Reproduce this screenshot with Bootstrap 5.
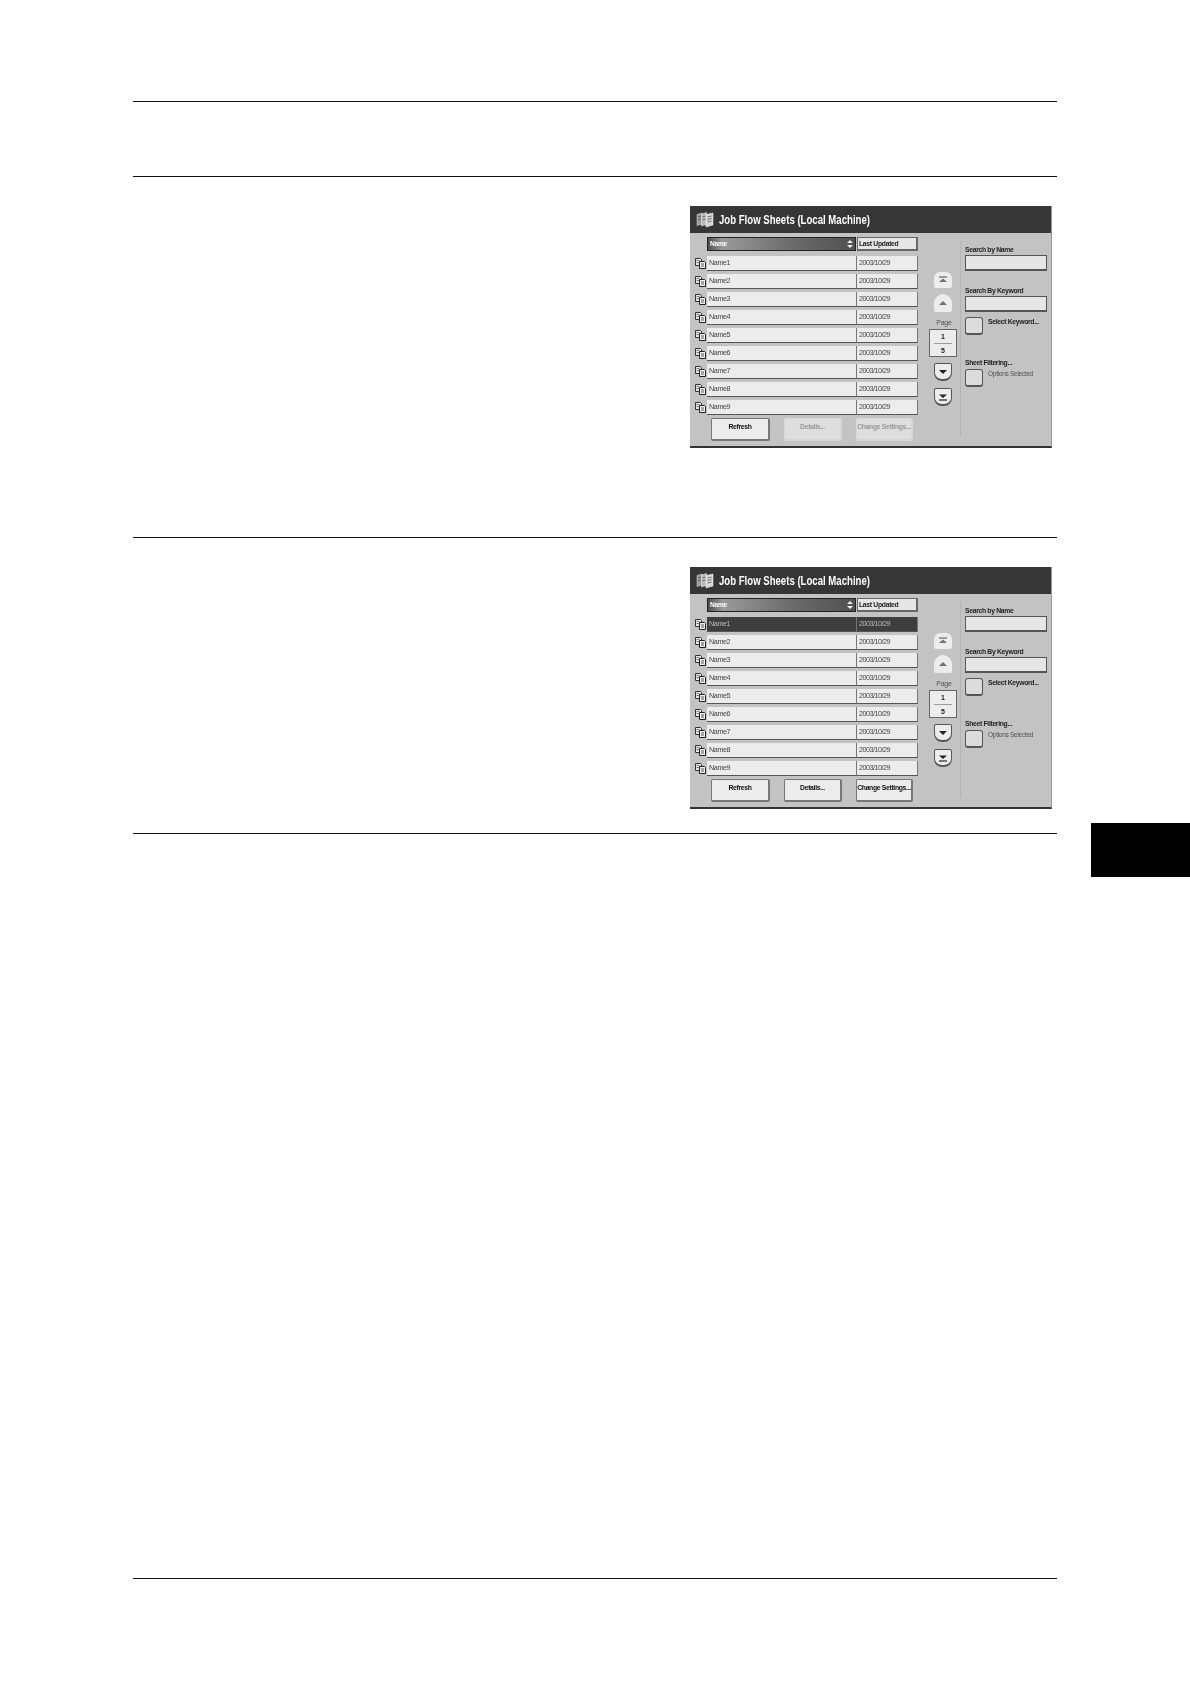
<!DOCTYPE html>
<html lang="en">
<head>
<meta charset="utf-8">
<title>Job Flow Sheets</title>
<link rel="stylesheet" href="https://cdn.jsdelivr.net/npm/bootstrap@5.3.0/dist/css/bootstrap.min.css">
<style>
html,body{background:#fff;margin:0}
body{font-family:"Liberation Sans",Arial,sans-serif;height:1684px;overflow:hidden}
.pg-main{width:924px;margin-left:133px;padding-top:101px}
.pg-rule{border-top:1px solid #111}
.pg-tab{width:99px;height:54px;margin-left:34px;margin-top:823px;background:#000}
.sec-a{height:75px}
.sec-b{height:361px;padding-top:29px}
.sec-c{height:296px;padding-top:29px}
.sec-d{height:745px}
.fx-panel{width:362px;height:242px;margin-left:557px;background:#c3c3c3;border-bottom:2px solid #333;border-right:1px solid #999;filter:blur(.45px);overflow:hidden}
.fx-head{height:27px;background:#363636;color:#fff;font-weight:700;font-size:12px;padding-left:6px;gap:5px}
.fx-head span{display:inline-block;white-space:nowrap;transform:scaleX(.8);transform-origin:left center}
.fx-body{height:213px}
.fx-list{width:238px;padding-top:4px}
.fx-hrow{padding-left:17px;height:14px;margin-bottom:5px}
.fx-sort{width:149px;background:linear-gradient(90deg,#4e4e4e,#9a9a9a 10%,#6d6d6d 55%,#505050);border:1px solid #222;color:#fff;font-size:6.6px;letter-spacing:-.25px;font-weight:700;padding-left:2px;line-height:12px;margin-right:1px}
.fx-sort svg{margin:2px 2px 0 0}
.fx-upd{width:61px;background:#e6e6e6;border:1px solid #666;border-width:1px 2px 2px 1px;font-size:6.8px;letter-spacing:-.3px;font-weight:700;line-height:11px;color:#222;padding-left:1px;white-space:nowrap}
.fx-row{height:15px;margin-bottom:3px;font-size:7.2px;letter-spacing:-.4px;color:#444;padding-left:5px}
.fx-row svg{width:11px;height:11px;margin-right:1px;flex:none;margin-top:2px}
.fx-name,.fx-date{background:#ececec;height:15px;line-height:14px;border-bottom:1px solid #555;border-right:1px solid #777;padding-left:2px}
.fx-name{width:150px}
.fx-date{width:61px;padding-left:2px;letter-spacing:-.5px}
.fx-row.on .fx-name,.fx-row.on .fx-date{background:#3e3e3e;color:#bbb}
.fx-btns{padding-left:21px;margin-top:1px}
.fx-btn{height:23px;background:#ececec;border-radius:2px;font-size:6.8px;letter-spacing:-.32px;font-weight:700;text-align:center;line-height:15px;color:#111;border:1px solid #777;border-bottom-width:2px;border-right-width:2px;white-space:nowrap}
.fx-btn.off{background:#dedede;border-color:#d6d6d6;color:#999}
.w-a{width:59px;margin-right:14px}
.w-b{width:58px;margin-right:14px}
.w-c{width:57px}
.fx-nav{width:32px;padding:39px 0 0 1px}
.fx-arrow{width:18px;margin-left:5px;background:#ececec;border-radius:9px 9px 2px 2px}
.fx-arrow svg{display:block;margin:auto}
.fx-arrow.a1{height:16px;border-radius:6px 6px 2px 2px;margin-bottom:6px}
.fx-arrow.a2{height:18px;margin-bottom:6px}
.fx-arrow.a3{height:18px;border-radius:2px 2px 8px 8px;border:1px solid #555;border-width:1px 1px 2px;margin-bottom:7px}
.fx-arrow.a4{height:18px;border-radius:2px 2px 8px 8px;border:1px solid #555;border-width:1px 1px 2px}
.fx-pl{font-size:7px;letter-spacing:-.25px;color:#555;text-align:center;line-height:10px;margin-left:-1px;height:11px}
.fx-pg{width:28px;height:28px;background:#ececec;border:1px solid #666;font-size:7px;font-weight:700;text-align:center;margin-bottom:6px;line-height:13px;color:#222}
.fx-pg hr{margin:0 4px;opacity:.6;border-color:#666}
.fx-side{width:91px;border-left:1px solid #b4b4b4;margin-top:8px;padding-left:4px;height:196px;font-size:6.8px;letter-spacing:-.32px;color:#222;padding-top:1px}
.fx-lab{font-weight:700;height:11px;line-height:11px;margin-top:2px}
.fx-in{width:82px;height:16px;background:#e6e6e6;border:1px solid #555;border-width:1px 1px 2px 1px}
.fx-chk{width:18px;height:18px;background:#dcdcdc;border:1px solid #555;border-width:1px 1px 2px 1px;border-radius:3px;flex:none;margin-right:5px}
.fx-tall{margin-top:14px}
.fx-mid{margin-top:5px}
.fx-sel{font-weight:700;line-height:10px}
.fx-opt{color:#555;line-height:9px;font-size:6.6px;letter-spacing:-.32px}
.fx-low{margin-top:22px}
.fx-low2{margin-top:1px}
</style>
</head>
<body>
<svg width="0" height="0" class="d-block">
<defs>
<symbol id="ic-doc" viewBox="0 0 11 11"><path d="M.5.5h5l1 1v6h-6z" fill="#e8e8e8" stroke="#333" stroke-width="1"/><path d="M1.500 2.500h3M1.500 4.500h3" stroke="#666" stroke-width=".8"/><path d="M4.500 3.500h5l1 1v6h-6z" fill="#f2f2f2" stroke="#222" stroke-width="1"/><path d="M6 6h3M6 8h3" stroke="#444" stroke-width=".9"/></symbol>
<symbol id="ic-stack" viewBox="0 0 18 16"><path d="M1 2.500l5-1.500v11l-5 1.500z" fill="#999" stroke="#ddd" stroke-width=".5"/><path d="M5.500 2l5-1.500v12l-5 1.500z" fill="#bbb" stroke="#eee" stroke-width=".5"/><path d="M10 2.500l7-1.500v12l-7 2z" fill="#d6d6d6" stroke="#fff" stroke-width=".5"/><path d="M11.500 5l4-1M11.500 7.500l4-1M11.500 10l4-1M2 5l3-1M2 8l3-1M6.500 5l3-1M6.500 8l3-1" stroke="#555" stroke-width=".8"/></symbol>
<symbol id="ic-sort" viewBox="0 0 6 8"><path d="M3 0l3 3h-6zM3 8l-3-3h6z" fill="#eee"/></symbol>
<symbol id="ic-top" viewBox="0 0 12 8"><path d="M2 1h8" stroke="#666" stroke-width="1.200"/><path d="M6 2.500l4 3.500h-8z" fill="#707070"/></symbol>
<symbol id="ic-up" viewBox="0 0 12 8"><path d="M6 2l4 4h-8z" fill="#707070"/></symbol>
<symbol id="ic-dn" viewBox="0 0 12 8"><path d="M6 6l-4-4h8z" fill="#222"/></symbol>
<symbol id="ic-bot" viewBox="0 0 12 8"><path d="M6 5l-4-3.500h8z" fill="#222"/><path d="M2 7h8" stroke="#222" stroke-width="1.200"/></symbol>
</defs>
</svg>
<div class="d-flex">
<div class="pg-main flex-shrink-0">
<div class="pg-rule sec-a"></div>

<div class="pg-rule sec-b">
<div class="fx-panel">
<div class="fx-head d-flex align-items-center"><svg width="18" height="16"><use href="#ic-stack"/></svg><span>Job Flow Sheets (Local Machine)</span></div>
<div class="fx-body d-flex">
<div class="fx-list">
<div class="fx-hrow d-flex"><div class="fx-sort d-flex justify-content-between"><span>Name</span><svg width="6" height="8"><use href="#ic-sort"/></svg></div><div class="fx-upd">Last Updated</div></div>
<div class="fx-row d-flex"><svg><use href="#ic-doc"/></svg><div class="fx-name">Name1</div><div class="fx-date">2003/10/29</div></div>
<div class="fx-row d-flex"><svg><use href="#ic-doc"/></svg><div class="fx-name">Name2</div><div class="fx-date">2003/10/29</div></div>
<div class="fx-row d-flex"><svg><use href="#ic-doc"/></svg><div class="fx-name">Name3</div><div class="fx-date">2003/10/29</div></div>
<div class="fx-row d-flex"><svg><use href="#ic-doc"/></svg><div class="fx-name">Name4</div><div class="fx-date">2003/10/29</div></div>
<div class="fx-row d-flex"><svg><use href="#ic-doc"/></svg><div class="fx-name">Name5</div><div class="fx-date">2003/10/29</div></div>
<div class="fx-row d-flex"><svg><use href="#ic-doc"/></svg><div class="fx-name">Name6</div><div class="fx-date">2003/10/29</div></div>
<div class="fx-row d-flex"><svg><use href="#ic-doc"/></svg><div class="fx-name">Name7</div><div class="fx-date">2003/10/29</div></div>
<div class="fx-row d-flex"><svg><use href="#ic-doc"/></svg><div class="fx-name">Name8</div><div class="fx-date">2003/10/29</div></div>
<div class="fx-row d-flex"><svg><use href="#ic-doc"/></svg><div class="fx-name">Name9</div><div class="fx-date">2003/10/29</div></div>
<div class="fx-btns d-flex"><div class="fx-btn w-a">Refresh</div><div class="fx-btn w-b off">Details...</div><div class="fx-btn w-c off">Change Settings...</div></div>
</div>
<div class="fx-nav">
<div class="fx-arrow a1 d-flex"><svg width="12" height="8"><use href="#ic-top"/></svg></div>
<div class="fx-arrow a2 d-flex"><svg width="12" height="8"><use href="#ic-up"/></svg></div>
<div class="fx-pl">Page</div>
<div class="fx-pg">1<hr>5</div>
<div class="fx-arrow a3 d-flex"><svg width="12" height="8"><use href="#ic-dn"/></svg></div>
<div class="fx-arrow a4 d-flex"><svg width="12" height="8"><use href="#ic-bot"/></svg></div>
</div>
<div class="fx-side">
<div class="fx-lab">Search by Name</div>
<div class="fx-in"></div>
<div class="fx-lab fx-tall">Search By Keyword</div>
<div class="fx-in"></div>
<div class="d-flex fx-mid"><div class="fx-chk"></div><div class="fx-sel">Select Keyword...</div></div>
<div class="fx-lab fx-low">Sheet Filtering...</div>
<div class="d-flex fx-low2"><div class="fx-chk"></div><div class="fx-opt">Options Selected</div></div>
</div>
</div>
</div>
</div>

<div class="pg-rule sec-c">
<div class="fx-panel">
<div class="fx-head d-flex align-items-center"><svg width="18" height="16"><use href="#ic-stack"/></svg><span>Job Flow Sheets (Local Machine)</span></div>
<div class="fx-body d-flex">
<div class="fx-list">
<div class="fx-hrow d-flex"><div class="fx-sort d-flex justify-content-between"><span>Name</span><svg width="6" height="8"><use href="#ic-sort"/></svg></div><div class="fx-upd">Last Updated</div></div>
<div class="fx-row on d-flex"><svg><use href="#ic-doc"/></svg><div class="fx-name">Name1</div><div class="fx-date">2003/10/29</div></div>
<div class="fx-row d-flex"><svg><use href="#ic-doc"/></svg><div class="fx-name">Name2</div><div class="fx-date">2003/10/29</div></div>
<div class="fx-row d-flex"><svg><use href="#ic-doc"/></svg><div class="fx-name">Name3</div><div class="fx-date">2003/10/29</div></div>
<div class="fx-row d-flex"><svg><use href="#ic-doc"/></svg><div class="fx-name">Name4</div><div class="fx-date">2003/10/29</div></div>
<div class="fx-row d-flex"><svg><use href="#ic-doc"/></svg><div class="fx-name">Name5</div><div class="fx-date">2003/10/29</div></div>
<div class="fx-row d-flex"><svg><use href="#ic-doc"/></svg><div class="fx-name">Name6</div><div class="fx-date">2003/10/29</div></div>
<div class="fx-row d-flex"><svg><use href="#ic-doc"/></svg><div class="fx-name">Name7</div><div class="fx-date">2003/10/29</div></div>
<div class="fx-row d-flex"><svg><use href="#ic-doc"/></svg><div class="fx-name">Name8</div><div class="fx-date">2003/10/29</div></div>
<div class="fx-row d-flex"><svg><use href="#ic-doc"/></svg><div class="fx-name">Name9</div><div class="fx-date">2003/10/29</div></div>
<div class="fx-btns d-flex"><div class="fx-btn w-a">Refresh</div><div class="fx-btn w-b">Details...</div><div class="fx-btn w-c">Change Settings...</div></div>
</div>
<div class="fx-nav">
<div class="fx-arrow a1 d-flex"><svg width="12" height="8"><use href="#ic-top"/></svg></div>
<div class="fx-arrow a2 d-flex"><svg width="12" height="8"><use href="#ic-up"/></svg></div>
<div class="fx-pl">Page</div>
<div class="fx-pg">1<hr>5</div>
<div class="fx-arrow a3 d-flex"><svg width="12" height="8"><use href="#ic-dn"/></svg></div>
<div class="fx-arrow a4 d-flex"><svg width="12" height="8"><use href="#ic-bot"/></svg></div>
</div>
<div class="fx-side">
<div class="fx-lab">Search by Name</div>
<div class="fx-in"></div>
<div class="fx-lab fx-tall">Search By Keyword</div>
<div class="fx-in"></div>
<div class="d-flex fx-mid"><div class="fx-chk"></div><div class="fx-sel">Select Keyword...</div></div>
<div class="fx-lab fx-low">Sheet Filtering...</div>
<div class="d-flex fx-low2"><div class="fx-chk"></div><div class="fx-opt">Options Selected</div></div>
</div>
</div>
</div>
</div>

<div class="pg-rule sec-d"></div>
<div class="pg-rule"></div>
</div>
<div class="pg-tab flex-shrink-0"></div>
</div>
<script src="https://cdn.jsdelivr.net/npm/bootstrap@5.3.0/dist/js/bootstrap.bundle.min.js"></script>
</body>
</html>
